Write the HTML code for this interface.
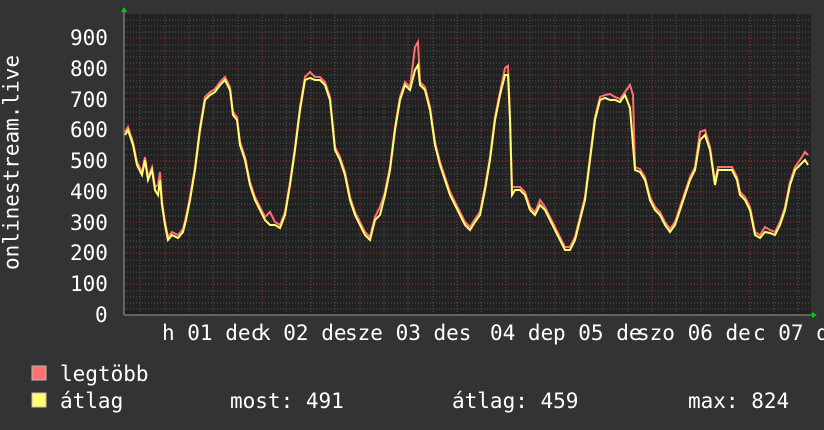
<!DOCTYPE html><html><head><style>
body{margin:0;width:824px;height:430px;background:#333;overflow:hidden;font-family:"DejaVu Sans Mono","Liberation Mono",monospace;color:#fff}
.t{position:absolute;font-size:21px;line-height:1;white-space:pre}
</style></head><body>
<svg width="824" height="430" style="position:absolute;left:0;top:0">
<rect x="124" y="14" width="687" height="301" fill="#222"/>
<g stroke="#555" stroke-width="1" stroke-dasharray="1,2">
<path d="M124 309H810M124 303H810M124 297H810M124 291H810M124 278H810M124 272H810M124 266H810M124 260H810M124 247H810M124 241H810M124 235H810M124 229H810M124 216H810M124 210H810M124 204H810M124 198H810M124 186H810M124 180H810M124 174H810M124 168H810M124 155H810M124 149H810M124 143H810M124 137H810M124 124H810M124 118H810M124 112H810M124 106H810M124 93H810M124 87H810M124 81H810M124 75H810M124 63H810M124 57H810M124 51H810M124 45H810M124 32H810M124 26H810M124 20H810"/>
<path d="M140 14V315M189 14V315M213 14V315M238 14V315M286 14V315M311 14V315M335 14V315M384 14V315M408 14V315M433 14V315M481 14V315M506 14V315M530 14V315M579 14V315M603 14V315M628 14V315M676 14V315M701 14V315M725 14V315M774 14V315M798 14V315"/>
</g>
<g stroke="#a33" stroke-width="1" stroke-dasharray="1,2">
<path d="M124 284H810M124 253H810M124 222H810M124 192H810M124 161H810M124 130H810M124 99H810M124 69H810M124 38H810"/>
<path d="M165 14V315M262 14V315M360 14V315M457 14V315M555 14V315M652 14V315M750 14V315"/>
</g>
<path d="M124 315H812M124 315V12" stroke="#999" stroke-width="1"/>
<path d="M121 12L124 7L127 12Z M812 312L817 315L812 318Z" fill="#0c0"/>
<polyline fill="none" stroke="#ff7070" stroke-width="2" points="125,132 128,127 133,142 137,162 142,172 145,157 148,177 152,167 155,187 158,185 160,172 162,202 165,222 168,237 172,232 178,235 183,229 186,217 190,197 195,167 200,127 205,97 210,92 215,89 220,82 225,77 230,87 233,112 237,117 240,142 245,157 250,182 255,197 260,207 265,217 270,212 275,222 280,225 285,212 290,182 295,147 300,107 305,77 310,72 315,77 320,77 325,82 330,97 335,147 340,157 345,172 350,197 355,212 360,222 365,232 370,237 375,217 380,207 385,192 390,167 395,127 400,97 405,82 410,87 415,47 418,42 420,82 425,87 430,107 435,142 440,162 445,177 450,192 455,202 460,212 465,222 470,227 475,219 480,212 485,187 490,157 495,117 500,92 505,68 508,66 510,117 512,187 515,187 520,187 525,192 530,207 535,212 540,200 545,207 550,217 555,227 560,237 565,247 570,247 575,237 580,217 585,197 590,157 595,117 600,97 605,95 610,94 615,97 620,99 625,92 630,85 633,95 635,167 640,169 645,177 650,197 655,207 660,212 665,222 670,229 675,222 680,207 685,192 690,177 695,167 700,132 705,130 710,147 715,182 718,167 722,167 727,167 732,167 737,177 740,192 745,197 750,207 755,232 760,235 765,227 770,230 775,232 780,222 785,207 790,182 795,167 800,160 805,152 808,155"/>
<polyline fill="none" stroke="#ffff70" stroke-width="2" points="125,135 128,130 133,145 137,165 142,175 145,160 148,180 152,170 155,190 158,195 160,180 162,205 165,225 168,240 172,235 178,238 183,232 186,220 190,200 195,170 200,130 205,100 210,95 215,92 220,85 225,80 230,90 233,115 237,120 240,145 245,160 250,185 255,200 260,210 265,220 270,225 275,225 280,228 285,215 290,185 295,150 300,110 305,80 310,78 315,80 320,80 325,85 330,100 335,150 340,160 345,175 350,200 355,215 360,225 365,235 370,240 375,220 380,215 385,195 390,170 395,130 400,100 405,85 410,90 415,70 418,65 420,85 425,90 430,110 435,145 440,165 445,180 450,195 455,205 460,215 465,225 470,230 475,222 480,215 485,190 490,160 495,120 500,95 505,75 508,75 510,120 512,195 515,190 520,190 525,195 530,210 535,215 540,205 545,210 550,220 555,230 560,240 565,250 570,250 575,240 580,220 585,200 590,160 595,120 600,100 605,98 610,100 615,100 620,102 625,95 630,108 635,170 640,172 645,180 650,200 655,210 660,215 665,225 670,232 675,225 680,210 685,195 690,180 695,170 700,140 705,135 710,150 715,185 718,170 722,170 727,170 732,170 737,180 740,195 745,200 750,210 755,235 760,238 765,232 770,233 775,235 780,225 785,210 790,185 795,170 800,165 805,160 808,165"/>
<rect x="32" y="366" width="14" height="14" fill="#ff7070" stroke="#bbb"/>
<rect x="32" y="393" width="14" height="14" fill="#ffff70" stroke="#bbb"/>
</svg>
<div class="t" style="left:70px;top:28px">900</div>
<div class="t" style="left:70px;top:59px">800</div>
<div class="t" style="left:70px;top:90px">700</div>
<div class="t" style="left:70px;top:120px">600</div>
<div class="t" style="left:70px;top:151px">500</div>
<div class="t" style="left:70px;top:182px">400</div>
<div class="t" style="left:70px;top:213px">300</div>
<div class="t" style="left:70px;top:243px">200</div>
<div class="t" style="left:70px;top:274px">100</div>
<div class="t" style="left:95px;top:305px">0</div>
<div class="t" style="left:-98px;top:152px;width:220px;text-align:center;transform:rotate(-90deg);font-size:21px">onlinestream.live</div>
<div class="t" style="left:162px;top:323px">h 01 dec</div>
<div class="t" style="left:258px;top:323px">k 02 de</div>
<div class="t" style="left:345px;top:323px">sze 03 des</div>
<div class="t" style="left:490px;top:323px">04 de</div>
<div class="t" style="left:553px;top:323px">p 05 de</div>
<div class="t" style="left:637px;top:323px">szo 06 de</div>
<div class="t" style="left:753px;top:323px">c 07 d</div>
<div class="t" style="left:60px;top:364px">legtöbb</div>
<div class="t" style="left:60px;top:391px">átlag</div>
<div class="t" style="left:230px;top:391px">most: 491</div>
<div class="t" style="left:452px;top:391px">átlag: 459</div>
<div class="t" style="left:688px;top:391px">max: 824</div>
</body></html>
